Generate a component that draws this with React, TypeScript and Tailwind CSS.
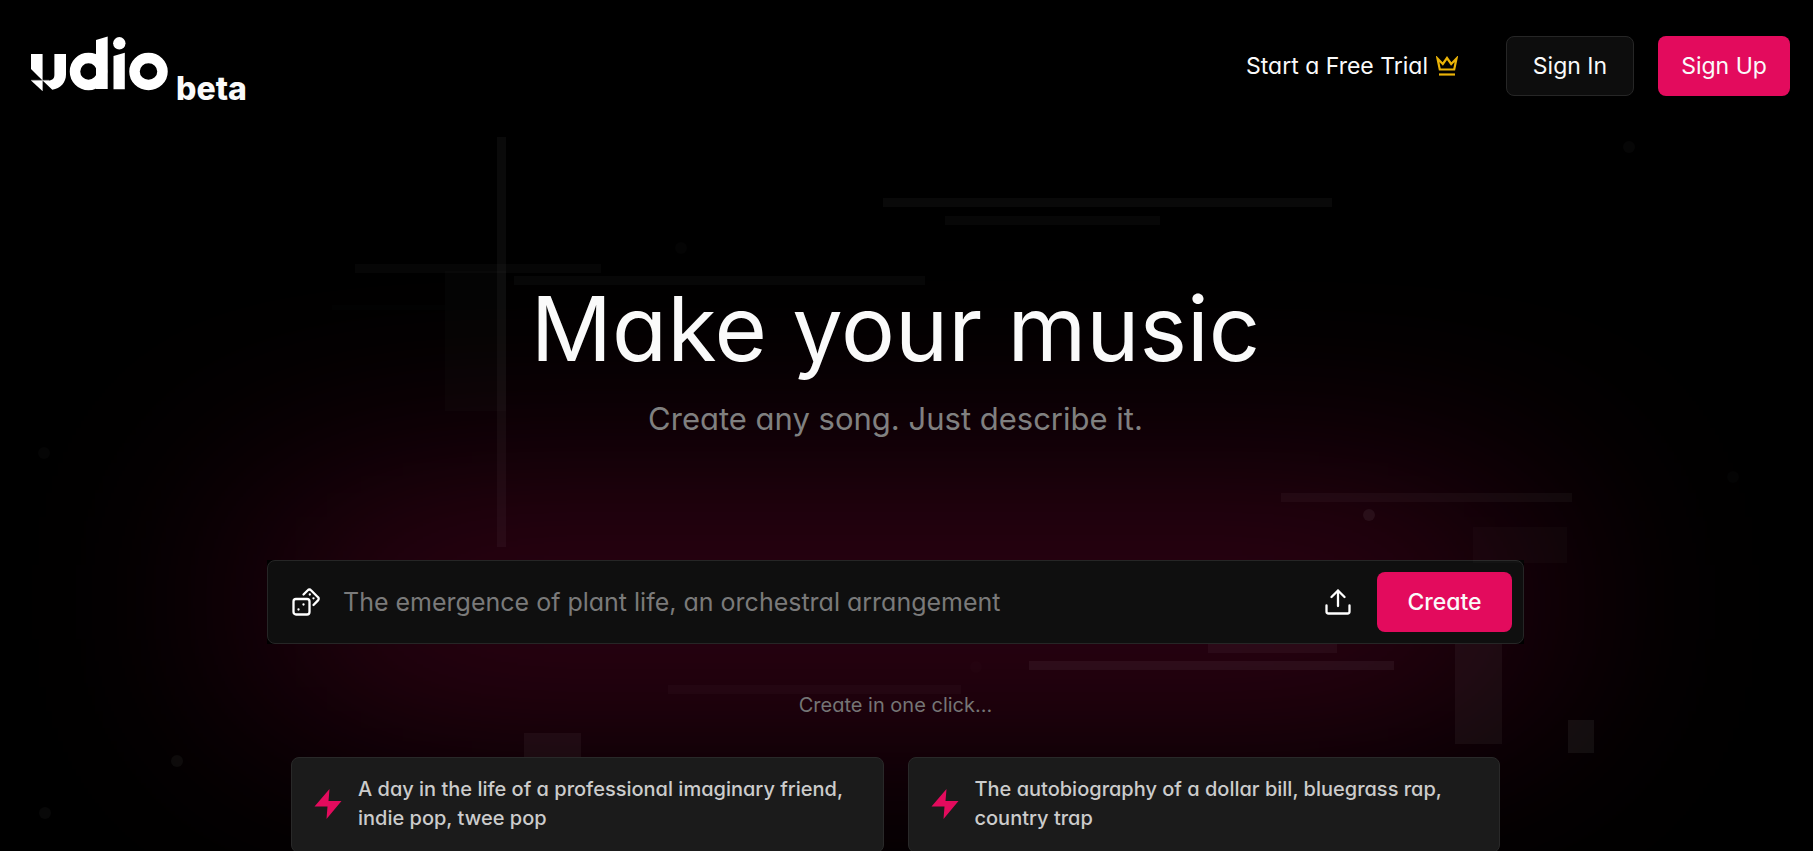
import { useState } from "react"

const shapes = [
    { x: 497, y: 137, w: 9, h: 410, o: 0.04 },
    { x: 355, y: 264, w: 246, h: 9, o: 0.022 },
    { x: 445, y: 271, w: 61, h: 140, o: 0.015 },
    { x: 514, y: 276, w: 411, h: 9, o: 0.028 },
    { x: 332, y: 305, w: 113, h: 5, o: 0.006 },
    { x: 883, y: 198, w: 449, h: 9, o: 0.036 },
    { x: 945, y: 216, w: 215, h: 9, o: 0.028 },
    { x: 1281, y: 493, w: 291, h: 9, o: 0.035 },
    { x: 1473, y: 527, w: 94, h: 36, o: 0.02 },
    { x: 1208, y: 644, w: 129, h: 9, o: 0.04 },
    { x: 1029, y: 661, w: 365, h: 9, o: 0.05 },
    { x: 1455, y: 644, w: 47, h: 100, o: 0.045 },
    { x: 1568, y: 720, w: 26, h: 33, o: 0.055 },
    { x: 668, y: 685, w: 293, h: 9, o: 0.025 },
    { x: 524, y: 733, w: 57, h: 60, o: 0.045 },
]

const dots = [
    { x: 1629, y: 147, o: 0.025 },
    { x: 681, y: 248, o: 0.015 },
    { x: 44, y: 453, o: 0.02 },
    { x: 1733, y: 477, o: 0.015 },
    { x: 1369, y: 515, o: 0.06 },
    { x: 976, y: 667, o: 0.012 },
    { x: 177, y: 761, o: 0.045 },
    { x: 45, y: 813, o: 0.03 },
]

const suggestions = [
    "A day in the life of a professional imaginary friend, indie pop, twee pop",
    "The autobiography of a dollar bill, bluegrass rap, country trap",
]

function Backdrop() {
    return (
        <svg className="absolute inset-0 size-full pointer-events-none" aria-hidden="true">
            {shapes.map((s) => (
                <rect key={`${s.x}-${s.y}`} x={s.x} y={s.y} width={s.w} height={s.h} fill="#fff" fillOpacity={s.o} />
            ))}
            {dots.map((d) => (
                <circle key={`${d.x}-${d.y}`} cx={d.x} cy={d.y} r="6" fill="#fff" fillOpacity={d.o} />
            ))}
        </svg>
    )
}

function Logo() {
    return (
        <svg className="w-[137px] h-14" viewBox="31 36 137 56" fill="#fff" aria-hidden="true">
            {/* Split mark */}
            <path d="M31 54h11.3v26.2L31 69z" />
            <path d="M31 80.6h11.4V91z" />
            <path d="M54.6 54H66v20.5c0 8-5.5 14-13.7 15.2l-9.7-9.3h6c3.8 0 6-2.2 6-6z" />
            <path d="M42.5 54v37M54.6 54v26M31 80.3h18" stroke="#fff" strokeWidth="0.4" fill="none" />
            {/* Bowl and stem */}
            <circle cx="88.5" cy="71.5" r="13.5" fill="none" stroke="#fff" strokeWidth="10.5" />
            <path d="M96 40l11.7-3.4V89H96z" />
            {/* Dot and bar */}
            <circle cx="119.3" cy="43.3" r="6.2" />
            <path d="M113.5 56l11.3-3.2V89.3h-11.3z" />
            {/* Ring */}
            <ellipse cx="148.5" cy="71.5" rx="14" ry="13.5" fill="none" stroke="#fff" strokeWidth="10.5" />
        </svg>
    )
}

function CrownIcon() {
    return (
        <svg className="w-[22px] h-5" viewBox="0 0 22 20" fill="none" stroke="#eab308" strokeWidth="2.2" aria-hidden="true">
            <path d="M3.8 13.5L1.5 2.5 6.8 8 11 2l4.2 6 5.3-5.5-2.3 11z" />
            <path d="M3 18.5h16" />
        </svg>
    )
}

function DiceIcon() {
    return (
        <svg className="size-7" viewBox="0 0 28 28" fill="none" stroke="#fff" strokeWidth="2.3" strokeLinecap="round" strokeLinejoin="round" aria-hidden="true">
            <rect x="1.5" y="11" width="16" height="15.5" rx="2.5" />
            <path d="M11.5 6.5l4.3-4.3a2.2 2.2 0 0 1 3.2 0l7 7a2.2 2.2 0 0 1 0 3.2L21.5 17" />
            <path d="M6.5 21.5h.01M11.5 16.5h.01M17.8 6.5h.01M21.5 10.3h.01" />
        </svg>
    )
}

function UploadIcon() {
    return (
        <svg className="w-[26px] h-[26px]" viewBox="0 0 26 26" fill="none" stroke="#fff" strokeWidth="2.3" strokeLinecap="round" strokeLinejoin="round" aria-hidden="true">
            <path d="M13 17V1.500M6.5 8L13 1.5 19.5 8" />
            <path d="M1.5 16.5v6a2 2 0 0 0 2 2h19a2 2 0 0 0 2-2v-6" />
        </svg>
    )
}

function BoltIcon() {
    return (
        <svg className="w-7 h-[30px] shrink-0" viewBox="0 0 28 30" fill="#e30b5d" aria-hidden="true">
            <path d="M15.5 0L0.5 17.5h13L12.5 30 27.5 12H14.5z" />
        </svg>
    )
}

export default function App() {
    const [prompt, setPrompt] = useState("")

    return (
        <div className="relative h-screen overflow-hidden bg-black text-neutral-50 font-['Inter','Liberation_Sans',sans-serif] [font-feature-settings:'cv11']">
            {/* ========== HEADER ========== */}
            <header className="relative z-10 flex items-start justify-between pt-9 pl-[31px] pr-[23px]">
                <a href="/" aria-label="udio beta" className="flex items-start gap-2">
                    <Logo />
                    <span className="mt-[37px] text-[32px] leading-8 font-extrabold [font-feature-settings:normal]">beta</span>
                </a>
                <nav className="flex items-center gap-6">
                    <a href="/pricing" className="flex items-center gap-2 mr-6 text-[23px] leading-8">
                        Start a Free Trial
                        <CrownIcon />
                    </a>
                    <button type="button" className="w-32 h-[60px] rounded-lg border border-[#262626] bg-[#0d0d0d] text-[23px] leading-8">
                        Sign In
                    </button>
                    <button type="button" className="w-[132px] h-[60px] rounded-lg bg-[#e30b5d] text-[23px] leading-8">
                        Sign Up
                    </button>
                </nav>
            </header>

            {/* ========== HERO ========== */}
            <main className="flex flex-col items-center pt-[180px] pr-[22px]">
                <h1 className="relative z-10 text-[90px] leading-[88px] font-normal">Make your music</h1>
                <p className="relative z-10 mt-[26px] text-[31px] leading-10 text-[#808080]">Create any song. Just describe it.</p>

                <div className="relative mt-[121px] w-full max-w-[1257px]">
                    {/* Glow behind the prompt bar */}
                    <div className="absolute inset-0 bg-[#e30b5d] opacity-65 blur-[128px]" />
                    <div className="relative bg-black">
                        <form
                            onSubmit={(e) => e.preventDefault()}
                            className="flex items-center h-[84px] pl-6 pr-[11px] rounded-lg border border-[#262626] bg-[#0f0f0f]"
                        >
                            <button type="button" aria-label="Random prompt">
                                <DiceIcon />
                            </button>
                            <input
                                type="text"
                                aria-label="Prompt"
                                value={prompt}
                                onChange={(e) => setPrompt(e.target.value)}
                                placeholder="The emergence of plant life, an orchestral arrangement"
                                className="flex-1 min-w-0 mx-[23px] bg-transparent text-[25px] leading-8 outline-none placeholder:text-[#7a7a7a]"
                            />
                            <button type="button" aria-label="Upload audio" className="mr-[26px]">
                                <UploadIcon />
                            </button>
                            <button type="submit" className="w-[135px] h-[60px] rounded-lg bg-[#e30b5d] text-[23px] leading-8 font-medium">
                                Create
                            </button>
                        </form>
                    </div>
                </div>

                <p className="relative z-10 mt-[47px] text-xl leading-7 text-[#757575]">Create in one click...</p>

                <div className="relative z-10 mt-[38px] grid grid-cols-2 gap-6 w-full max-w-[1209px]">
                    {suggestions.map((text) => (
                        <button
                            key={text}
                            type="button"
                            className="flex items-center gap-4 h-24 px-[22px] pb-0.5 rounded-lg border border-[#292929] bg-[#1b1b1b] text-left text-xl leading-[29px] font-medium text-[#cccccc]"
                        >
                            <BoltIcon />
                            <span>{text}</span>
                        </button>
                    ))}
                </div>
            </main>

            <Backdrop />
        </div>
    )
}
